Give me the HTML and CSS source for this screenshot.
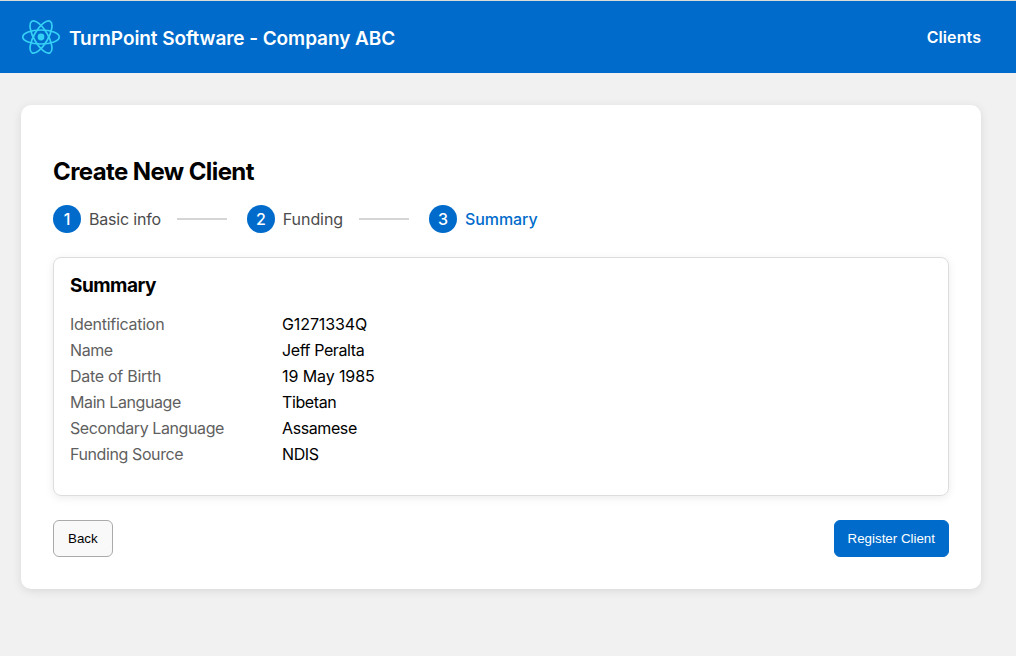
FILE: index.html
```html
<!DOCTYPE html>
<html lang="en">
<head>
<meta charset="utf-8">
<title>Create New Client</title>
<link rel="stylesheet" href="styles.css">
</head>
<body>
<header class="topbar">
  <div class="brand">
    <svg class="logo" width="40" height="36" viewBox="-20 -18 40 36" fill="none" stroke="#35d0f5" stroke-width="1.7">
      <ellipse rx="18.2" ry="7"/>
      <ellipse rx="18.2" ry="7" transform="rotate(60)"/>
      <ellipse rx="18.2" ry="7" transform="rotate(120)"/>
      <circle r="3.4" fill="#35d0f5" stroke="none"/>
    </svg>
    <span class="brand-name">TurnPoint Software - Company ABC</span>
  </div>
  <nav><a class="nav-link">Clients</a></nav>
</header>
<main class="card">
  <h1 class="title">Create New Client</h1>
  <ol class="steps">
    <li class="step"><span class="num">1</span><span class="label">Basic info</span><span class="line"></span></li>
    <li class="step"><span class="num">2</span><span class="label wide">Funding</span><span class="line"></span></li>
    <li class="step active"><span class="num">3</span><span class="label wide">Summary</span></li>
  </ol>
  <section class="summary">
    <h2 class="subtitle">Summary</h2>
    <dl class="details">
      <dt class="loose">Identification</dt><dd class="numeric">G1271334Q</dd>
      <dt>Name</dt><dd>Jeff Peralta</dd>
      <dt class="loose">Date of Birth</dt><dd class="numeric">19 May 1985</dd>
      <dt>Main Language</dt><dd>Tibetan</dd>
      <dt>Secondary Language</dt><dd>Assamese</dd>
      <dt>Funding Source</dt><dd>NDIS</dd>
    </dl>
  </section>
  <div class="actions">
    <button class="btn">Back</button>
    <button class="btn primary">Register Client</button>
  </div>
</main>
</body>
</html>
```
FILE: styles.css
```css
* { box-sizing: border-box; }
body { margin: 0; min-height: 656px; background: #f1f1f1; color: #000; font: 16px/20px Inter, sans-serif; }
.topbar { display: flex; align-items: center; justify-content: space-between; height: 73px; padding: 0 35px 0 21px; border-top: 1px solid #d5dcda; background: #006bcb; color: #fff; font-weight: 600; }
.brand { display: flex; align-items: center; gap: 8px; }
.logo { display: block; }
.brand-name { font-size: 19px; letter-spacing: -0.07px; padding-top: 3px; }
.nav-link { font-size: 16px; letter-spacing: 0.08px; }
.card { width: 960px; height: 484px; margin: 32px 0 0 21px; padding: 52px 32px 32px; border-radius: 10px; background: #fff; box-shadow: 0 2px 10px rgba(0,0,0,.1); }
.title { margin: 0; font-size: 24px; line-height: 30px; font-weight: 650; letter-spacing: -0.6px; }
.steps { display: flex; gap: 20px; margin: 18px 0 24px; padding: 0; list-style: none; }
.step { display: flex; align-items: center; height: 28px; color: #4c4c4c; letter-spacing: -0.2px; }
.num { display: grid; place-items: center; width: 28px; height: 28px; margin-right: 8px; border-radius: 50%; background: #006bcb; color: #fff; font-weight: 500; }
.wide { letter-spacing: -0.08px; }
.line { width: 50px; height: 2px; margin-left: 16px; background: #d5d5d5; }
.active { color: #006bcb; font-weight: 500; }
.summary { height: 239px; padding: 16px 16px 15px; border: 1px solid #ddd; border-radius: 8px; box-shadow: 0 2px 8px rgba(0,0,0,.08); }
.subtitle { margin: 0 0 13px; font-size: 19px; line-height: 24px; font-weight: 650; letter-spacing: -0.5px; }
.details { display: grid; grid-template-columns: 200px 1fr; column-gap: 12px; grid-auto-rows: 26px; align-items: center; margin: 0; letter-spacing: -0.4px; }
.details dt { color: #5f5f5f; }
.details dt.loose { letter-spacing: -0.28px; }
.details dd { margin: 0; }
.details .numeric { letter-spacing: -0.1px; }
.actions { display: flex; justify-content: space-between; margin-top: 24px; }
.btn { height: 37px; padding: 0 14px; border: 1px solid #aaa; border-radius: 6px; background: #f9f9f9; color: #000; font: 13.33px "Liberation Sans", Arial, sans-serif; }
.primary { padding: 0 13px; border-color: #006bcb; background: #006bcb; color: #fff; }
```
